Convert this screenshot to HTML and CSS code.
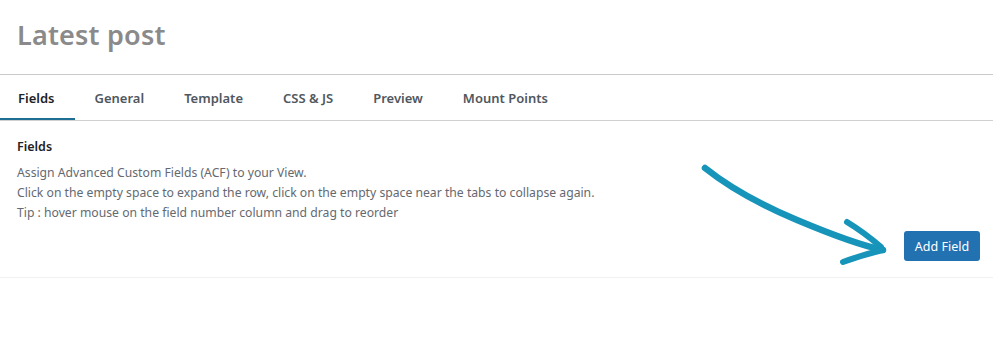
FILE: index.html
```html
<!DOCTYPE html>
<html>
<head>
<meta charset="utf-8">
<link rel="stylesheet" href="styles.css">
</head>
<body>
<div class="page">
  <h1 class="title">Latest post</h1>
  <nav class="tabs">
    <a class="tab active">Fields</a>
    <a class="tab">General</a>
    <a class="tab">Template</a>
    <a class="tab">CSS &amp; JS</a>
    <a class="tab">Preview</a>
    <a class="tab">Mount Points</a>
  </nav>
  <section class="panel">
    <div class="info">
      <h2 class="heading">Fields</h2>
      <p class="desc">Assign Advanced Custom Fields (ACF) to your View.<br>Click on the empty space to expand the row, click on the empty space near the tabs to collapse again.<br>Tip : hover mouse on the field number column and drag to reorder</p>
    </div>
    <div class="actions">
      <button class="btn">Add Field</button>
    </div>
    <svg class="arrow" width="200" height="120" viewBox="0 0 200 120">
      <path d="M5 17 Q 40 45 97 69 T 183 99" fill="none" stroke="#1794b9" stroke-width="6.5" stroke-linecap="round"/>
      <path d="M147 71 Q 165 82 181 96" fill="none" stroke="#1794b9" stroke-width="6" stroke-linecap="round"/>
      <path d="M183 99 Q 162 104 143 111" fill="none" stroke="#1794b9" stroke-width="6" stroke-linecap="round"/>
    </svg>
  </section>
</div>
</body>
</html>
```
FILE: styles.css
```css
html, body {
  margin: 0;
  padding: 0;
  background: #fff;
}
.page {
  font-family: "Noto Sans", "Open Sans", sans-serif;
  width: 993px;
}
.title {
  margin: 0;
  padding: 16px 17px 0;
  height: 58px;
  box-sizing: border-box;
  font-size: 27px;
  font-weight: 600;
  color: #8a8a8a;
  line-height: 38px;
  letter-spacing: 0.2px;
}
.tabs {
  display: flex;
  border-top: 1px solid #c9c9c9;
  border-bottom: 1px solid #cfcfcf;
  height: 45px;
  margin-top: 16px;
}
.tab {
  display: flex;
  align-items: center;
  padding: 0 20px 0 18px;
  margin-right: 2px;
  font-size: 13px;
  font-weight: 600;
  color: #50575e;
  box-sizing: border-box;
  border-bottom: 2px solid transparent;
  padding-top: 2px;
}
.tab.active {
  color: #1d2327;
  border-bottom-color: #1e6e93;
}
.panel {
  position: relative;
  display: flex;
  justify-content: space-between;
  align-items: flex-end;
  padding: 16px 13px 16px 17px;
  border-bottom: 1px solid #f1f1f1;
}
.info {
  padding-bottom: 38px;
}
.heading {
  margin: 0 0 6px;
  font-size: 12.5px;
  font-weight: 600;
  color: #1d2327;
  line-height: 20px;
}
.desc {
  margin: 0;
  font-size: 12.2px;
  line-height: 20px;
  color: #646970;
}
.btn {
  font-family: "Noto Sans", "Open Sans", sans-serif;
  background: #2271b1;
  color: #fff;
  border: none;
  border-radius: 3px;
  height: 30px;
  width: 76px;
  font-size: 12.5px;
  padding: 0;
}
.arrow {
  position: absolute;
  left: 700px;
  top: 30px;
  overflow: visible;
}
```
